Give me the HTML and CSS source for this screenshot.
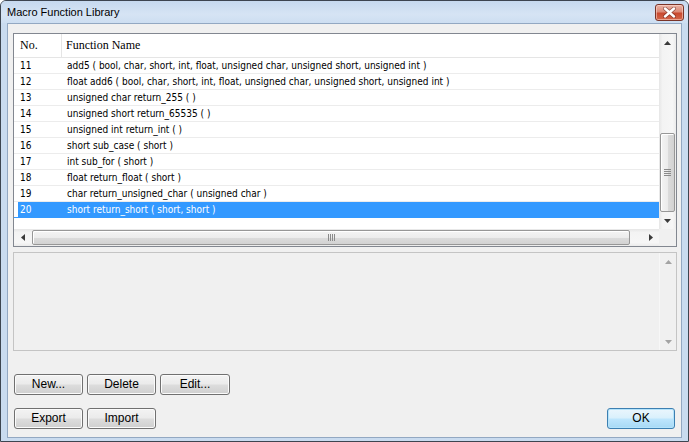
FILE: index.html
```html
<!DOCTYPE html>
<html>
<head>
<meta charset="utf-8">
<title>Macro Function Library</title>
<link rel="stylesheet" href="styles.css">
</head>
<body>
<div class="window">
  <div class="titlebar">
    <span class="title">Macro Function Library</span>
    <div class="close">
      <svg width="13" height="11" viewBox="0 0 13 11">
        <path d="M2 1.5 L11 9.5 M11 1.5 L2 9.5" stroke="#5a2018" stroke-width="4" stroke-linecap="round" opacity="0.55"/>
        <path d="M2 1.5 L11 9.5 M11 1.5 L2 9.5" stroke="#ffffff" stroke-width="2.4" stroke-linecap="round"/>
      </svg>
    </div>
  </div>
  <div class="client">
    <div class="listview">
      <div class="lv-main">
        <div class="lv-header">
          <div class="hcell hno">No.</div>
          <div class="hcell hname">Function Name</div>
        </div>
        <div class="lv-rows">
          <div class="row"><span class="cno">11</span><span class="cname">add5 ( bool, char, short, int, float, unsigned char, unsigned short, unsigned int )</span></div>
          <div class="row"><span class="cno">12</span><span class="cname">float add6 ( bool, char, short, int, float, unsigned char, unsigned short, unsigned int )</span></div>
          <div class="row"><span class="cno">13</span><span class="cname">unsigned char return_255 (  )</span></div>
          <div class="row"><span class="cno">14</span><span class="cname">unsigned short return_65535 (  )</span></div>
          <div class="row"><span class="cno">15</span><span class="cname">unsigned int return_int (  )</span></div>
          <div class="row"><span class="cno">16</span><span class="cname">short sub_case ( short )</span></div>
          <div class="row"><span class="cno">17</span><span class="cname">int sub_for ( short )</span></div>
          <div class="row"><span class="cno">18</span><span class="cname">float return_float ( short )</span></div>
          <div class="row"><span class="cno">19</span><span class="cname">char return_unsigned_char ( unsigned char )</span></div>
          <div class="row sel"><span class="cno">20</span><span class="cname">short return_short ( short, short )</span></div>
        </div>
      </div>
      <div class="vscroll">
        <div class="arrow"><svg width="7" height="4" viewBox="0 0 7 4"><polygon points="3.5,0 7,4 0,4" fill="#3a3a3a"/></svg></div>
        <div class="vtrack">
          <div class="vthumb">
            <svg width="7" height="7" viewBox="0 0 7 7"><path d="M0 0.5H7M0 2.5H7M0 4.5H7M0 6.5H7" stroke="#8a8a8a" stroke-width="1"/></svg>
          </div>
        </div>
        <div class="arrow"><svg width="7" height="4" viewBox="0 0 7 4"><polygon points="0,0 7,0 3.5,4" fill="#3a3a3a"/></svg></div>
      </div>
      <div class="hscroll">
        <div class="arrow"><svg width="4" height="7" viewBox="0 0 4 7"><polygon points="0,3.5 4,0 4,7" fill="#3a3a3a"/></svg></div>
        <div class="htrack">
          <div class="hthumb">
            <svg width="7" height="7" viewBox="0 0 7 7"><path d="M0.5 0V7M2.5 0V7M4.5 0V7M6.5 0V7" stroke="#8a8a8a" stroke-width="1"/></svg>
          </div>
        </div>
        <div class="arrow"><svg width="4" height="7" viewBox="0 0 4 7"><polygon points="0,0 4,3.5 0,7" fill="#3a3a3a"/></svg></div>
      </div>
      <div class="corner"></div>
    </div>

    <div class="desc">
      <div class="desc-body"></div>
      <div class="vscroll disabled">
        <div class="arrow"><svg width="7" height="4" viewBox="0 0 7 4"><polygon points="3.5,0 7,4 0,4" fill="#a3a3a3"/></svg></div>
        <div class="vtrack"></div>
        <div class="arrow"><svg width="7" height="4" viewBox="0 0 7 4"><polygon points="0,0 7,0 3.5,4" fill="#a3a3a3"/></svg></div>
      </div>
    </div>

    <div class="btnrow first">
      <div class="btn">New...</div>
      <div class="btn">Delete</div>
      <div class="btn wide">Edit...</div>
    </div>
    <div class="btnrow second">
      <div class="btn">Export</div>
      <div class="btn">Import</div>
      <div class="spacer"></div>
      <div class="btn default">OK</div>
    </div>
  </div>
</div>
</body>
</html>
```

FILE: styles.css
```css
html, body {
  margin: 0;
  padding: 0;
  background: #ffffff;
}

.window {
  width: 689px;
  height: 442px;
  box-sizing: border-box;
  border: 1px solid #3d4550;
  border-radius: 6px 6px 0 0;
  background: #c9dbef;
  display: flex;
  flex-direction: column;
  overflow: hidden;
}

.titlebar {
  height: 22px;
  flex: none;
  display: flex;
  align-items: flex-start;
  justify-content: space-between;
  background: linear-gradient(#c6d9ef, #d6e4f4 60%, #cddef1);
}

.title {
  margin-left: 6px;
  line-height: 23px;
  font-family: "Liberation Sans", Arial, sans-serif;
  font-size: 11px;
  color: #000;
}

.close {
  margin-top: 3px;
  margin-right: 4px;
  width: 29px;
  height: 17px;
  box-sizing: border-box;
  border: 1px solid #7a3428;
  border-radius: 3px;
  background: linear-gradient(#eab3a6 0%, #dc8a77 45%, #c9492f 55%, #d3664a 100%);
  box-shadow: inset 0 0 0 1px rgba(255, 220, 210, 0.55);
  display: flex;
  align-items: center;
  justify-content: center;
}

.client {
  flex: 1;
  margin: 0 6px 3px 6px;
  border: 1px solid #93a8c2;
  background: #f0f0f0;
  padding: 9px 4px 0 5px;
  display: flex;
  flex-direction: column;
}

/* list view */
.listview {
  width: 664px;
  box-sizing: border-box;
  border: 1px solid #828790;
  background: #ffffff;
  display: grid;
  grid-template-columns: 645px 17px;
  grid-template-rows: 195px 17px;
}

.lv-main {
  overflow: hidden;
  background: #ffffff;
}

.lv-header {
  height: 24px;
  box-sizing: border-box;
  border-bottom: 1px solid #e5e5e5;
  display: flex;
  background: #ffffff;
}

.hcell {
  font-family: "Liberation Serif", "Times New Roman", serif;
  font-size: 12px;
  line-height: 23px;
  color: #000;
  white-space: nowrap;
}

.hno {
  width: 41px;
  padding-left: 6px;
  border-right: 1px solid #e5e5e5;
}

.hname {
  padding-left: 4px;
}

.row {
  height: 16px;
  box-sizing: border-box;
  border-bottom: 1px solid #ececec;
  display: flex;
  align-items: center;
  padding-left: 6px;
  font-family: "DejaVu Sans Condensed", "Liberation Sans", Tahoma, sans-serif;
  font-stretch: condensed;
  font-size: 10px;
  color: #000;
  white-space: nowrap;
}

.row.sel {
  background: #3399ff;
  color: #ffffff;
  box-shadow: inset 4px 0 0 #ffffff;
  border-bottom-color: #3399ff;
}

.cno {
  width: 47px;
  flex: none;
}

/* scrollbars */
.vscroll {
  display: flex;
  flex-direction: column;
  background: linear-gradient(90deg, #e6e6e6 0%, #f3f3f3 20%, #f6f6f6 80%, #ebebeb 100%);
}

.hscroll {
  display: flex;
  flex-direction: row;
  background: linear-gradient(#e6e6e6 0%, #f3f3f3 20%, #f6f6f6 80%, #ebebeb 100%);
}

.arrow {
  width: 17px;
  height: 17px;
  flex: none;
  display: flex;
  align-items: center;
  justify-content: center;
}

.vtrack {
  flex: 1;
  display: flex;
  flex-direction: column;
}

.vthumb {
  margin-top: 82px;
  margin-left: 1px;
  width: 15px;
  height: 79px;
  box-sizing: border-box;
  border: 1px solid #979797;
  border-radius: 2px;
  background: linear-gradient(90deg, #f4f4f4 0%, #ececec 50%, #dcdcdc 51%, #d2d2d2 100%);
  box-shadow: inset 1px 1px 0 #ffffff;
  display: flex;
  align-items: center;
  justify-content: center;
}

.htrack {
  flex: 1;
  display: flex;
}

.hthumb {
  margin-left: 1px;
  margin-top: 1px;
  width: 598px;
  height: 15px;
  box-sizing: border-box;
  border: 1px solid #979797;
  border-radius: 2px;
  background: linear-gradient(#f4f4f4 0%, #ececec 50%, #dcdcdc 51%, #d2d2d2 100%);
  box-shadow: inset 1px 1px 0 #ffffff;
  display: flex;
  align-items: center;
  justify-content: center;
}

.corner {
  background: #f0f0f0;
}

/* description box */
.desc {
  margin-top: 5px;
  width: 664px;
  height: 99px;
  box-sizing: border-box;
  border: 1px solid #c4c4c4;
  background: #f0f0f0;
  display: grid;
  grid-template-columns: 645px 17px;
}

.vscroll.disabled {
  background: #f0f0f0;
  border-left: 1px solid #f7f7f7;
}

/* buttons */
.btnrow {
  display: flex;
  gap: 4px;
  margin-left: 1px;
  margin-right: 2px;
}

.btnrow.first {
  margin-top: 23px;
}

.btnrow.second {
  margin-top: 13px;
}

.spacer {
  flex: 1;
}

.btn {
  width: 69px;
  height: 21px;
  box-sizing: border-box;
  border: 1px solid #707070;
  border-radius: 3px;
  background: linear-gradient(#f3f3f3 0%, #ebebeb 48%, #dddddd 52%, #cfcfcf 100%);
  box-shadow: inset 0 0 0 1px #fbfbfb;
  font-family: "Liberation Sans", Arial, sans-serif;
  font-size: 12px;
  line-height: 19px;
  text-align: center;
  color: #000;
}

.btn.wide {
  width: 70px;
}

.btn.default {
  width: 68px;
  border-color: #3c7fb1;
  background: linear-gradient(#eaf6fd 0%, #d9f0fc 48%, #bee6fd 52%, #a7d9f5 100%);
  box-shadow: inset 0 0 0 1px #b4e3fb;
}
```
